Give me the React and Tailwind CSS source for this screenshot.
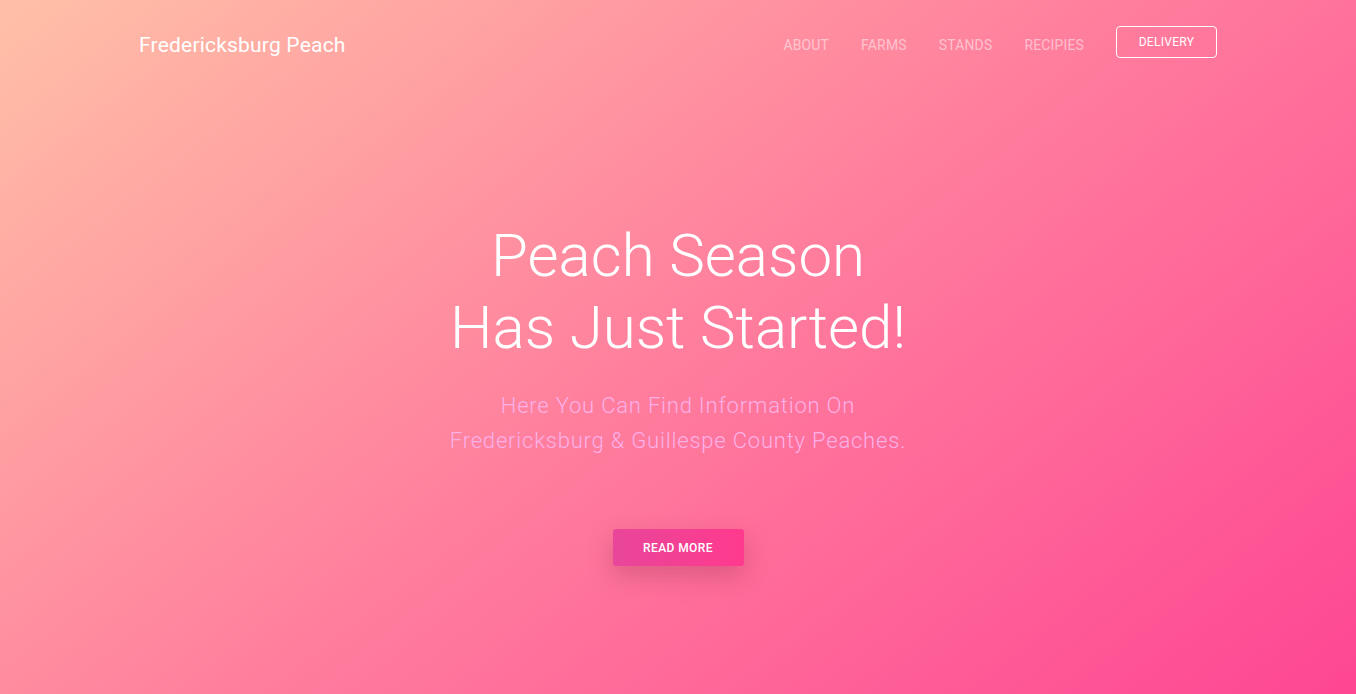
export default function App() {
  const links = ['About', 'Farms', 'Stands', 'Recipies'];

  return (
    <div className="min-h-[694px] w-full bg-[linear-gradient(142deg,#ffc0a7_0%,#ff7e9d_50%,#fe4693_100%)] font-['Roboto',sans-serif] text-white">
      {/* Navbar */}
      <nav className="mx-auto flex w-[1078px] items-center justify-between pt-[23px]">
        <a href="#" className="translate-y-[3px] text-[21px] font-normal leading-[38px] tracking-[0.2px]">
          Fredericksburg Peach
        </a>
        <div className="flex items-center">
          {links.map((l) => (
            <a key={l} href="#" className="mr-[32px] mt-[7px] text-[14px] uppercase tracking-[0.15px] text-white/50">
              {l}
            </a>
          ))}
          <a
            href="#"
            className="flex h-[32px] w-[101px] items-center justify-center rounded-[4px] border border-white text-[12px] uppercase tracking-[0.3px]"
          >
            Delivery
          </a>
        </div>
      </nav>

      {/* Hero */}
      <section className="flex flex-col items-center pt-[159px] text-center">
        <h1 className="text-[60px] font-light leading-[72px]">
          Peach Season
          <br />
          Has Just Started!
        </h1>
        <p className="mt-[24px] text-[22px] font-light leading-[35px] tracking-[0.8px] text-[#fcb0e8]">
          Here You Can Find Information On
          <br />
          Fredericksburg &amp; Guillespe County Peaches.
        </p>
        <button className="mt-[71px] h-[37px] w-[131px] rounded-[3px] bg-[linear-gradient(90deg,#e8469a,#ff3a8e)] text-[12px] font-medium uppercase tracking-[0.4px] shadow-[0_10px_25px_rgba(120,30,60,0.25)]">
          Read More
        </button>
      </section>
    </div>
  );
}
